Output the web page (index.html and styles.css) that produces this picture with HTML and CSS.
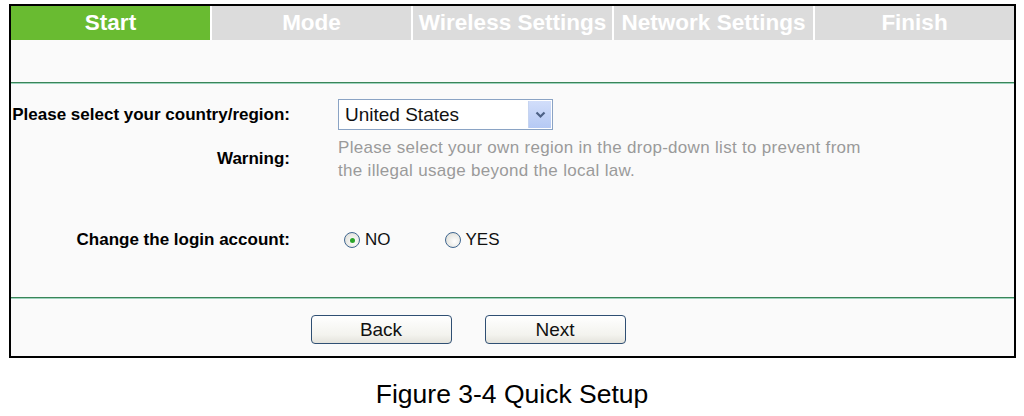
FILE: index.html
```html
<!DOCTYPE html>
<html lang="en">
<head>
    <meta charset="UTF-8">
    <title>Quick Setup</title>
    <link rel="stylesheet" href="styles.css">
</head>
<body>
    <div class="frame">
        <div class="tabs">
            <div class="tab active">Start</div>
            <div class="tab">Mode</div>
            <div class="tab">Wireless Settings</div>
            <div class="tab">Network Settings</div>
            <div class="tab">Finish</div>
        </div>
        <div class="head"></div>
        <div class="line"></div>

        <div class="content">
            <div class="row">
                <div class="label">Please select your country/region:</div>
                <div class="field">
                    <div class="select">
                        <span class="select-text">United States</span>
                        <span class="select-btn">
                            <svg width="11" height="8" viewBox="0 0 11 8"><path d="M1.5 1.5 L5.5 5.5 L9.5 1.5" fill="none" stroke="#4d6185" stroke-width="2.2"/></svg>
                        </span>
                    </div>
                </div>
            </div>
            <div class="row warn-row">
                <div class="label">Warning:</div>
                <div class="field warning">Please select your own region in the drop-down list to prevent from<br>the illegal usage beyond the local law.</div>
            </div>
            <div class="row radio-row">
                <div class="label">Change the login account:</div>
                <div class="field radios">
                    <label class="radio"><span class="dot checked"></span>NO</label>
                    <label class="radio"><span class="dot"></span>YES</label>
                </div>
            </div>
        </div>
        <div class="line"></div>

        <div class="buttons">
            <button type="button">Back</button>
            <button type="button">Next</button>
        </div>
    </div>

    <div class="caption">Figure 3-4 Quick Setup</div>
</body>
</html>
```

FILE: styles.css
```css
body {
    margin: 0;
    background-color: #fff;
    font-family: "Liberation Sans", Arial, sans-serif;
    color: #000;
}
.frame {
    margin: 4px 0 0 9px;
    width: 1003px;
    border: 2px solid #000;
    background-color: #fafafa;
}
.tabs {
    display: flex;
    gap: 2px;
    background-color: #fff;
}
.tab {
    width: 199px;
    height: 34px;
    line-height: 34px;
    text-align: center;
    background-color: #dcdcdc;
    color: #fff;
    font-size: 22.5px;
    font-weight: bold;
    white-space: nowrap;
    overflow: hidden;
}
.tab.active {
    background-color: #69bb31;
}
.head {
    height: 42px;
}
.line {
    height: 1px;
    background-color: #3a8558;
    border-bottom: 1px solid #9fd3bf;
}
.content {
    padding-top: 15px;
    height: 198px;
}
.row {
    display: grid;
    grid-template-columns: 279px 1fr;
    column-gap: 48px;
    align-items: center;
}
.label {
    text-align: right;
    font-size: 17px;
    font-weight: bold;
    white-space: nowrap;
    color: #000;
}
.select {
    width: 213px;
    height: 29px;
    border: 1px solid #8aa3c4;
    background-color: #fff;
    display: flex;
    align-items: center;
    justify-content: space-between;
}
.select-text {
    padding-left: 6px;
    font-size: 19px;
    color: #111;
}
.select-btn {
    width: 22px;
    height: 27px;
    margin-right: 1px;
    background: linear-gradient(#d2defa, #b5c9f4);
    border-left: 1px solid #c6d4f0;
    display: flex;
    align-items: center;
    justify-content: center;
}
.warn-row {
    margin-top: 5px;
}
.warning {
    font-size: 17px;
    letter-spacing: 0.3px;
    line-height: 23px;
    color: #9a9a9a;
    padding-top: 1px;
}
.radio-row {
    margin-top: 48px;
}
.radios {
    display: flex;
    padding-left: 6px;
    gap: 54px;
    font-size: 17px;
    color: #111;
}
.radio {
    display: flex;
    align-items: center;
    gap: 5px;
}
.dot {
    width: 14px;
    height: 14px;
    border: 1px solid #3f6690;
    border-radius: 50%;
    background: radial-gradient(circle at 60% 60%, #fff, #d8d8d0);
    display: flex;
    align-items: center;
    justify-content: center;
}
.dot.checked::after {
    content: "";
    width: 5px;
    height: 5px;
    border-radius: 50%;
    background-color: #2aa52a;
}
.buttons {
    display: flex;
    justify-content: center;
    gap: 33px;
    padding: 16px 0 12px 0;
    margin-left: -89px;
}
button {
    width: 141px;
    height: 29px;
    border: 1px solid #2f4f73;
    border-radius: 4px;
    background: linear-gradient(#ffffff, #f3f3ee 70%, #e4e3dc);
    font-family: "Liberation Sans", Arial, sans-serif;
    font-size: 19px;
    color: #111;
    padding: 0;
}
.caption {
    margin-top: 21px;
    text-align: center;
    font-size: 26.5px;
    color: #000;
}
```
